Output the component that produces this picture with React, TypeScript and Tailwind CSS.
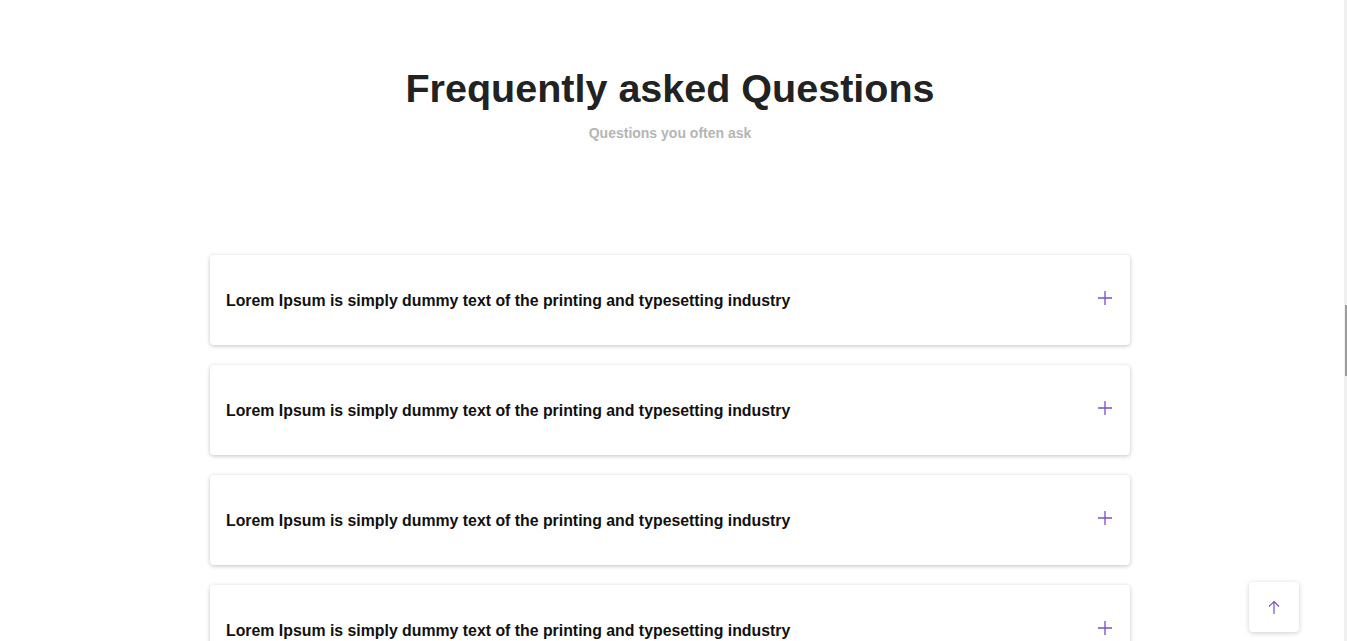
import React from "react";

const Plus = () => (
  <svg width="16" height="16" viewBox="0 0 16 16" fill="none" stroke="#7b4fc4" strokeWidth="1.3">
    <path d="M8 1v14M1 8h14" />
  </svg>
);

const ArrowUp = () => (
  <svg width="12" height="15" viewBox="0 0 12 15" fill="none" stroke="#7b4fc4" strokeWidth="1.2">
    <path d="M6 14V1.5M1 6.5L6 1.5l5 5" />
  </svg>
);

const items = Array.from({ length: 6 }, () => "Lorem Ipsum is simply dummy text of the printing and typesetting industry");

export default function App() {
  return (
    <div
      className="relative h-[641px] overflow-hidden bg-white pr-[7px]"
      style={{ fontFamily: '"Liberation Sans", Arial, sans-serif' }}
    >
      <div className="flex flex-col items-center pt-[64px]">
        <h1 className="text-[39.5px] font-bold leading-[48px] text-[#222]">Frequently asked Questions</h1>
        <p className="mt-[13px] text-[14px] font-bold leading-[16px] text-[#b5b5b5]">Questions you often ask</p>
      </div>
      <div className="mx-auto mt-[114px] flex w-[920px] flex-col gap-[20px] pb-[40px]">
        {items.map((t, i) => (
          <div
            key={i}
            className="flex h-[90px] items-center justify-between rounded-[4px] bg-white pl-[16px] pr-[17px] shadow-[0_1px_4px_rgba(0,0,0,0.24)]"
          >
            <span className="pt-[2px] text-[15.85px] font-bold text-[#111]">{t}</span>
            <span className="mb-[4px]">
              <Plus />
            </span>
          </div>
        ))}
      </div>
      <div className="absolute right-0 top-0 h-full w-[3px] bg-[#f0f0f0]">
        <div className="mt-[305px] h-[71px] w-[2px] ml-[1px] bg-[#9d9d9d]" />
      </div>
      <button className="absolute bottom-[9px] right-[48px] flex h-[50px] w-[50px] items-center justify-center rounded-[4px] bg-white shadow-[0_1px_5px_rgba(0,0,0,0.2)]">
        <ArrowUp />
      </button>
    </div>
  );
}
